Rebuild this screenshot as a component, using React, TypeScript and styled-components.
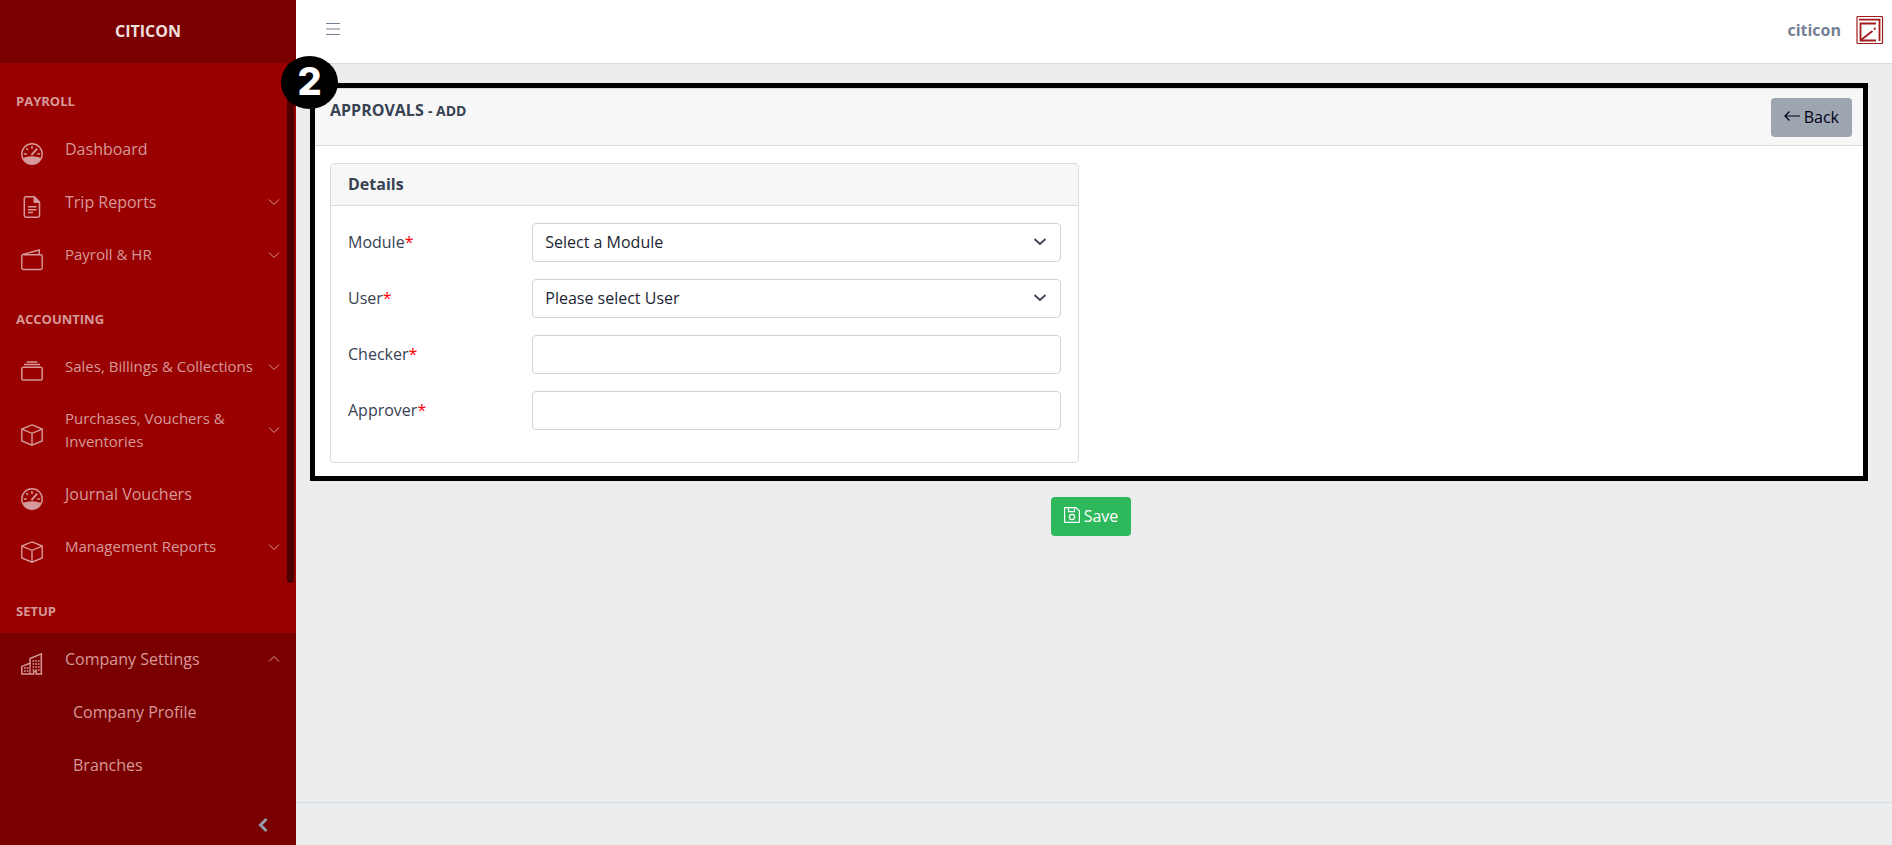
import React from 'react';
import styled, { createGlobalStyle, css } from 'styled-components';

const Global = createGlobalStyle`
  *, *::before, *::after { box-sizing: border-box; }
  body {
    margin: 0;
    background: #ebedef;
    color: #374253;
    font: 400 16px/24px "Open Sans", "Noto Sans", sans-serif;
  }
  button, input, select { font: inherit; }
`;

const Page = styled.div`
  display: flex;
  height: 100vh;
`;

const Sidebar = styled.aside`
  display: flex;
  flex: 0 0 296px;
  flex-direction: column;
  position: relative;
  background: #990000;
  color: #d69999;
`;

const Brand = styled.div`
  display: flex;
  flex: 0 0 63px;
  align-items: center;
  justify-content: center;
  padding-bottom: 2px;
  background: #7a0000;
  color: #f0dfdf;
  font-weight: 700;
`;

const Nav = styled.nav`
  flex: 1;
  min-height: 0;
  overflow: hidden;
`;

const NavTitle = styled.h2`
  margin: 0;
  padding: 28px 16px 12px;
  font-size: 13px;
  font-weight: 700;
  line-height: 20px;
`;

const NavGroup = styled.div`
  min-height: 170px;
  background: #7a0000;
`;

const NavItem = styled.a<{ $small?: boolean }>`
  display: flex;
  align-items: center;
  padding: 14px 16px 15px 17px;
  color: inherit;
  text-decoration: none;
  ${p => p.$small && css`font-size: 15px; line-height: 23px;`}
`;

const NavIcon = styled.svg`
  flex: 0 0 22px;
  width: 22px;
  height: 22px;
  margin: 5px 22px -5px 4px;
  fill: none;
  stroke: currentColor;
`;

const NavText = styled.span`
  flex: 1;
`;

const SubItem = styled(NavItem)`
  padding-left: 73px;
`;

const Chevron = styled.svg`
  flex: 0 0 12px;
  width: 12px;
  height: 12px;
  fill: none;
  stroke: currentColor;
`;

const ScrollThumb = styled.div`
  position: absolute;
  top: 63px;
  right: 2px;
  width: 7px;
  height: 520px;
  border-radius: 0 0 4px 4px;
  background: #4c0000;
`;

const Toggler = styled.button`
  display: flex;
  flex: 0 0 43px;
  align-items: center;
  justify-content: flex-end;
  padding: 2px 27px 0 0;
  border: 0;
  background: #7a0000;
  color: #919baa;
`;

const Wrapper = styled.div`
  display: flex;
  flex: 1;
  flex-direction: column;
  min-width: 0;
`;

const Header = styled.header`
  display: flex;
  flex: 0 0 64px;
  align-items: center;
  justify-content: space-between;
  padding: 0 8px 3px 29px;
  border-bottom: 1px solid #d8dbe0;
  background: #fff;
`;

const MenuButton = styled.button`
  display: flex;
  padding: 0 0 2px;
  border: 0;
  background: none;
  color: #768192;
`;

const Account = styled.a`
  display: flex;
  gap: 15px;
  align-items: center;
  color: #768192;
  font-weight: 700;
  text-decoration: none;
`;

const Main = styled.main`
  flex: 1;
  padding: 19px 24px 0 14px;
`;

const Frame = styled.section`
  position: relative;
  border: 5px solid #000;
  background: #fff;
`;

const Badge = styled.div`
  position: absolute;
  top: -32px;
  left: -34px;
  width: 57px;
  height: 53px;
  border-radius: 50%;
  background: #000;
  color: #fff;
  font-family: Inter, "Open Sans", sans-serif;
  font-size: 38px;
  font-weight: 800;
  line-height: 50px;
  text-align: center;
`;

const FrameHeader = styled.div`
  display: flex;
  align-items: flex-start;
  justify-content: space-between;
  padding: 9px 11px 8px 15px;
  border-top: 1px solid #d8dbe0;
  border-bottom: 1px solid #d8dbe0;
  background: #f7f7f7;
`;

const Title = styled.h1`
  margin: 0;
  font-size: 16px;
  font-weight: 700;
  line-height: 24px;
  small { font-size: 14px; }
`;

const Button = styled.button<{ $color: string; $ink: string }>`
  display: inline-flex;
  gap: 4px;
  align-items: center;
  height: 39px;
  padding: 0 13px 1px;
  border: 0;
  border-radius: 4px;
  background: ${p => p.$color};
  color: ${p => p.$ink};
`;

const ButtonIcon = styled.svg`
  margin-bottom: 2px;
  fill: none;
  stroke: currentColor;
`;

const FrameBody = styled.div`
  display: grid;
  grid-template-columns: 1fr 1fr;
  gap: 24px;
  padding: 17px 11px 13px 15px;
`;

const Card = styled.div`
  border: 1px solid #d8dbe0;
  border-radius: 4px;
  overflow: hidden;
`;

const CardHeader = styled.h2`
  margin: 0;
  padding: 8px 17px 9px;
  border-bottom: 1px solid #d8dbe0;
  background: #f7f7f7;
  font-size: 16px;
  font-weight: 700;
  line-height: 24px;
`;

const CardBody = styled.div`
  display: flex;
  flex-direction: column;
  gap: 17px;
  padding: 17px 17px 32px;
`;

const Field = styled.div`
  display: grid;
  grid-template-columns: repeat(12, 1fr);
  column-gap: 24px;
  align-items: center;
`;

const Label = styled.label`
  grid-column: span 3;
  padding-bottom: 2px;
`;

const Star = styled.span`
  color: #f00;
`;

const Control = styled.div`
  display: flex;
  grid-column: span 9;
  position: relative;
`;

const controlBox = css`
  width: 100%;
  height: 39px;
  padding: 0 12px 2px;
  border: 1px solid #ced2da;
  border-radius: 4px;
  background: #fff;
  color: #212633;
`;

const Select = styled.select`
  ${controlBox}
  appearance: none;
`;

const Input = styled.input`
  ${controlBox}
`;

const SelectArrow = styled.svg`
  position: absolute;
  top: 13px;
  right: 14px;
  width: 14px;
  height: 12px;
  fill: none;
  stroke: #3c4250;
  pointer-events: none;
`;

const Actions = styled.div`
  display: flex;
  justify-content: center;
  padding: 16px 0 0 4px;
`;

const Footer = styled.footer`
  flex: 0 0 43px;
  border-top: 1px solid #d8dbe0;
`;

const icons: Record<string, React.ReactNode> = {
  speed: (
    <>
      <circle cx="11" cy="11" r="10.2" strokeWidth="1.4" />
      <path d="M1.500 15Q11 11.500 20.500 15A10.200 10.200 0 0 1 1.500 15z" fill="currentColor" stroke="none" />
      <path d="M11 3v3M5.300 5.300l1.700 1.700M2.800 11h3M16.200 11h3" strokeWidth="1.500" />
      <path d="M10.400 12.200l5.800-6.600" strokeWidth="2" />
    </>
  ),
  file: (
    <>
      <path d="M5 .8h8.500l5 5.200v13.500a1.700 1.700 0 0 1-1.700 1.700H5a1.700 1.700 0 0 1-1.700-1.700v-17A1.700 1.700 0 0 1 5 .8z" strokeWidth="1.500" />
      <path d="M13 .8v5.700h5.500z" fill="currentColor" />
      <path d="M7 10.800h8.500M7 13.700h8.500M7 16.500h5" strokeWidth="1.400" />
    </>
  ),
  wallet: (
    <path d="M2.500 5.700h17a1.700 1.700 0 0 1 1.700 1.700v11.400a1.700 1.700 0 0 1-1.700 1.700h-17a1.700 1.700 0 0 1-1.700-1.700V6.900a1.700 1.700 0 0 1 1.200-1.600L18.300 1v4.500" strokeWidth="1.400" />
  ),
  layers: (
    <>
      <rect x=".8" y="6.200" width="20.400" height="12.800" rx="1.500" strokeWidth="1.500" />
      <path d="M3 3.600h16M5.700 1h10.600" strokeWidth="1.500" />
    </>
  ),
  box: (
    <path d="M11 .9L21.200 5v12L11 21.200.8 17V5zM.8 5.200L11 9.300l10.200-4.100M11 9.300v11.900" strokeWidth="1.400" />
  ),
  building: (
    <>
      <path d="M.8 21v-7.600L9 10.300V5.600L20.300 .9V21h-5v-2.500h-2.600V21z" strokeWidth="1.500" />
      <path d="M9 10v11" strokeWidth="1.300" />
      <path d="M3 15h4.500M3 18h4.500M11.500 8h7M11.500 11h7M11.500 14h7M11.500 17h7" strokeWidth="1.500" strokeDasharray="1.700 1" />
    </>
  ),
};

const Icon = ({ name }: { name: string }) => (
  <NavIcon viewBox="0 0 22 22" aria-hidden="true">{icons[name]}</NavIcon>
);

const Arrow = ({ up }: { up?: boolean }) => (
  <Chevron viewBox="0 0 12 12" aria-hidden="true">
    <path d={up ? 'M1 8.500l5-5 5 5' : 'M1 3.500l5 5 5-5'} />
  </Chevron>
);

type Entry = { icon: string; text: string; arrow?: boolean; small?: boolean };

const payroll: Entry[] = [
  { icon: 'speed', text: 'Dashboard' },
  { icon: 'file', text: 'Trip Reports', arrow: true },
  { icon: 'wallet', text: 'Payroll & HR', arrow: true, small: true },
];

const accounting: Entry[] = [
  { icon: 'layers', text: 'Sales, Billings & Collections', arrow: true, small: true },
  { icon: 'box', text: 'Purchases, Vouchers & Inventories', arrow: true, small: true },
  { icon: 'speed', text: 'Journal Vouchers' },
  { icon: 'box', text: 'Management Reports', arrow: true, small: true },
];

const Entries = ({ items }: { items: Entry[] }) => (
  <>
    {items.map(item => (
      <NavItem href="#" key={item.text} $small={item.small}>
        <Icon name={item.icon} />
        <NavText>{item.text}</NavText>
        {item.arrow && <Arrow />}
      </NavItem>
    ))}
  </>
);

const fields = [
  { id: 'module', label: 'Module', placeholder: 'Select a Module' },
  { id: 'user', label: 'User', placeholder: 'Please select User' },
  { id: 'checker', label: 'Checker' },
  { id: 'approver', label: 'Approver' },
];

export default function App() {
  return (
    <Page>
      <Global />
      <Sidebar>
        <Brand>CITICON</Brand>
        <Nav>
          <NavTitle>PAYROLL</NavTitle>
          <Entries items={payroll} />
          <NavTitle>ACCOUNTING</NavTitle>
          <Entries items={accounting} />
          <NavTitle>SETUP</NavTitle>
          <NavGroup>
            <NavItem href="#">
              <Icon name="building" />
              <NavText>Company Settings</NavText>
              <Arrow up />
            </NavItem>
            <SubItem href="#">Company Profile</SubItem>
            <SubItem href="#">Branches</SubItem>
          </NavGroup>
        </Nav>
        <ScrollThumb />
        <Toggler aria-label="Collapse sidebar">
          <svg width="12" height="16" viewBox="0 0 12 16" fill="none" stroke="currentColor" strokeWidth="3">
            <path d="M9.500 2L3.500 8l6 6" />
          </svg>
        </Toggler>
      </Sidebar>
      <Wrapper>
        <Header>
          <MenuButton aria-label="Toggle menu">
            <svg width="16" height="14" viewBox="0 0 16 14" stroke="currentColor">
              <path d="M1 1.500h14M1 7h14M1 12.500h14" strokeWidth="1.200" />
            </svg>
          </MenuButton>
          <Account href="#">
            citicon
            <svg width="28" height="28" viewBox="0 0 28 28" fill="none" stroke="#a31c1c" aria-hidden="true">
              <rect x="1" y=".5" width="25.500" height="27" rx="1" strokeWidth="1.200" />
              <path d="M3 3.700h20.500V25" strokeWidth="1.800" />
              <path d="M20 7.500H4.500V24.500H20" strokeWidth="1.800" />
              <path d="M5 24L16.500 15M18 13.500l1.500-1.500" strokeWidth="1.800" />
            </svg>
          </Account>
        </Header>
        <Main>
          <Frame>
            <FrameHeader>
              <Title>APPROVALS <small>- ADD</small></Title>
              <Button $color="#9da5b1" $ink="#000015">
                <ButtonIcon width="16" height="12" viewBox="0 0 16 12" aria-hidden="true">
                  <path d="M5.500 1.500L1 6l4.500 4.500M1 6h15" strokeWidth="1.200" />
                </ButtonIcon>
                Back
              </Button>
            </FrameHeader>
            <FrameBody>
              <Card>
                <CardHeader>Details</CardHeader>
                <CardBody>
                  {fields.map(f => (
                    <Field key={f.id}>
                      <Label htmlFor={f.id}>{f.label}<Star>*</Star></Label>
                      <Control>
                        {f.placeholder ? (
                          <>
                            <Select id={f.id}><option>{f.placeholder}</option></Select>
                            <SelectArrow viewBox="0 0 14 12">
                              <path d="M1.500 3L7 8 12.500 3" strokeWidth="1.800" />
                            </SelectArrow>
                          </>
                        ) : (
                          <Input id={f.id} type="text" />
                        )}
                      </Control>
                    </Field>
                  ))}
                </CardBody>
              </Card>
            </FrameBody>
            <Badge>2</Badge>
          </Frame>
          <Actions>
            <Button $color="#2eb85c" $ink="#fff">
              <ButtonIcon width="16" height="18" viewBox="0 0 16 18" aria-hidden="true">
                <path d="M.6 1.600h11.400l3.400 3.400v11.400H.6zM4.500 1.600v4h6v-4" strokeWidth="1.200" />
                <circle cx="8" cy="11" r="2.600" strokeWidth="1.200" />
              </ButtonIcon>
              Save
            </Button>
          </Actions>
        </Main>
        <Footer />
      </Wrapper>
    </Page>
  );
}
